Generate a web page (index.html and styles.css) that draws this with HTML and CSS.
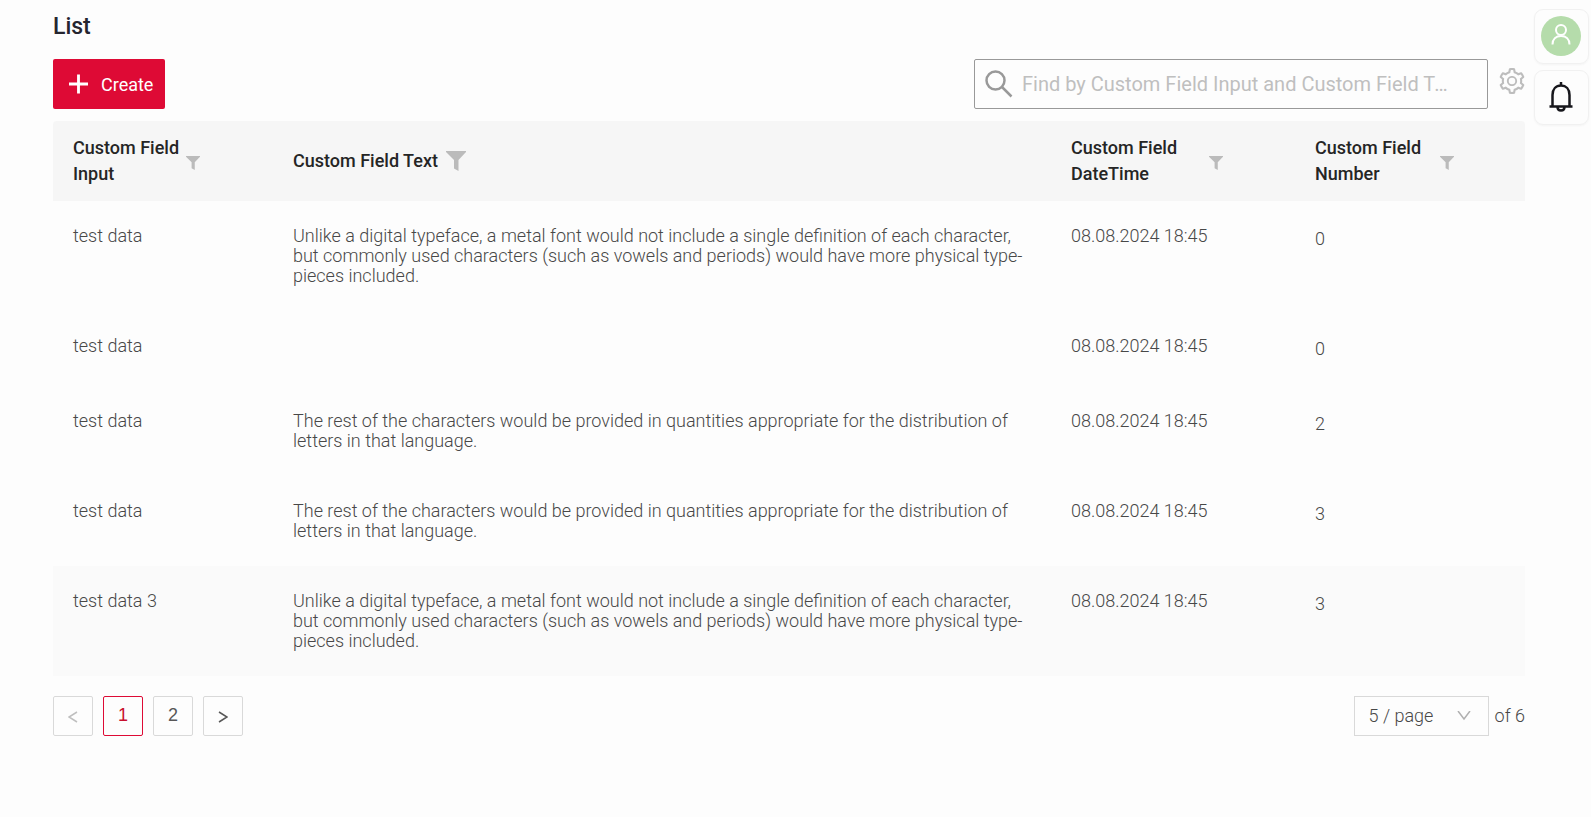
FILE: index.html
```html
<!DOCTYPE html>
<html lang="en">
<head>
<meta charset="utf-8">
<title>List</title>
<link rel="stylesheet" href="styles.css">
</head>
<body>
<svg class="defs" aria-hidden="true">
  <symbol id="funnel" viewBox="0 0 20 20"><path d="M0 0H20V1L12.5 9V20L8 17.5V9L0 1Z"/></symbol>
</svg>
<div class="page">
  <main class="main">
    <h1 class="title">List</h1>
    <div class="toolbar">
      <button class="create" type="button">
        <svg class="create-icon" viewBox="0 0 20 20"><path d="M10 0V20M0 10H20"/></svg>
        <span>Create</span>
      </button>
      <div class="tools">
        <label class="search">
          <svg class="search-icon" viewBox="0 0 28 28"><circle cx="10.500" cy="10.500" r="9"/><path d="M17 17L26.500 26.500"/></svg>
          <input class="search-input" type="text" aria-label="Search" placeholder="Find by Custom Field Input and Custom Field Text">
        </label>
        <button class="settings" type="button" aria-label="Table settings">
          <svg viewBox="64 64 896 896"><path d="M924.8 625.7l-65.5-56c3.1-19 4.7-38.4 4.7-57.8s-1.6-38.8-4.7-57.8l65.5-56a32.03 32.03 0 009.3-35.2l-.9-2.6a443.74 443.74 0 00-79.700-137.900l-1.800-2.100a32.120 32.120 0 00-35.100-9.500l-81.300 28.900c-30-24.600-63.500-44-99.700-57.600l-15.700-85a32.050 32.050 0 00-25.800-25.700l-2.700-.5c-52.100-9.400-106.900-9.400-159 0l-2.700.5a32.050 32.050 0 00-25.800 25.700l-15.800 85.400a351.860 351.860 0 00-99 57.400l-81.900-29.100a32 32 0 00-35.100 9.500l-1.800 2.100a446.020 446.020 0 00-79.700 137.900l-.9 2.600c-4.500 12.500-.8 26.500 9.300 35.200l66.300 56.600c-3.100 18.800-4.600 38-4.600 57.100 0 19.200 1.500 38.400 4.600 57.100L99 625.500a32.030 32.030 0 00-9.300 35.200l.9 2.600c18.100 50.400 44.900 96.900 79.700 137.900l1.800 2.100a32.120 32.120 0 0035.100 9.500l81.900-29.100c29.800 24.500 63.100 43.900 99 57.400l15.800 85.400a32.050 32.050 0 0025.800 25.700l2.700.5a449.400 449.400 0 00159 0l2.700-.5a32.050 32.050 0 0025.800-25.700l15.700-85a350 350 0 0099.700-57.600l81.300 28.900a32 32 0 0035.100-9.500l1.800-2.100c34.800-41.100 61.600-87.500 79.700-137.900l.9-2.600c4.500-12.300.8-26.300-9.300-35zM788.300 465.900c2.500 15.100 3.800 30.600 3.800 46.100s-1.300 31-3.800 46.100l-6.600 40.100 74.700 63.900a370.030 370.030 0 01-42.600 73.600L721 702.800l-31.400 25.800c-23.900 19.600-50.500 35-79.300 45.800l-38.100 14.300-17.900 97a377.500 377.500 0 01-85 0l-17.900-97.200-37.800-14.500c-28.500-10.800-55-26.200-78.700-45.700l-31.400-25.900-93.400 33.200c-17-22.900-31.200-47.600-42.600-73.600l75.500-64.500-6.500-40c-2.400-14.900-3.700-30.300-3.700-45.500 0-15.300 1.200-30.600 3.700-45.500l6.500-40-75.500-64.500c11.300-26.100 25.600-50.700 42.600-73.600l93.400 33.200 31.400-25.900c23.700-19.500 50.200-34.900 78.700-45.700l37.900-14.300 17.900-97.200c28.100-3.200 56.800-3.200 85 0l17.900 97 38.100 14.300c28.700 10.800 55.400 26.200 79.300 45.800l31.400 25.800 92.800-32.900c17 22.900 31.200 47.600 42.600 73.600L781.800 426l6.500 39.900zM512 336c-97.200 0-176 78.800-176 176s78.800 176 176 176 176-78.800 176-176-78.800-176-176-176zm0 288a112 112 0 110-224 112 112 0 010 224z" fill-rule="evenodd"/></svg>
        </button>
      </div>
    </div>
    <table class="table">
      <colgroup><col class="col-input"><col><col class="col-date"><col class="col-number"></colgroup>
      <thead>
        <tr>
          <th><div class="head"><span>Custom Field Input</span><button class="filter" type="button" aria-label="Filter by input"><svg><use href="#funnel"/></svg></button></div></th>
          <th><div class="head single"><span>Custom Field Text</span><button class="filter large" type="button" aria-label="Filter by text"><svg><use href="#funnel"/></svg></button></div></th>
          <th><div class="head wide"><span>Custom Field DateTime</span><button class="filter" type="button" aria-label="Filter by date"><svg><use href="#funnel"/></svg></button></div></th>
          <th><div class="head medium"><span>Custom Field Number</span><button class="filter" type="button" aria-label="Filter by number"><svg><use href="#funnel"/></svg></button></div></th>
        </tr>
      </thead>
      <tbody>
        <tr><td>test data</td><td>Unlike a digital typeface, a metal font would not include a single definition of each character, but commonly used characters (such as vowels and periods) would have more physical type-pieces included.</td><td>08.08.2024 18:45</td><td class="number">0</td></tr>
        <tr><td>test data</td><td></td><td>08.08.2024 18:45</td><td class="number">0</td></tr>
        <tr><td>test data</td><td>The rest of the characters would be provided in quantities appropriate for the distribution of letters in that language.</td><td>08.08.2024 18:45</td><td class="number">2</td></tr>
        <tr><td>test data</td><td>The rest of the characters would be provided in quantities appropriate for the distribution of letters in that language.</td><td>08.08.2024 18:45</td><td class="number">3</td></tr>
        <tr class="hovered"><td>test data 3</td><td>Unlike a digital typeface, a metal font would not include a single definition of each character, but commonly used characters (such as vowels and periods) would have more physical type-pieces included.</td><td>08.08.2024 18:45</td><td class="number">3</td></tr>
      </tbody>
    </table>
    <div class="footer">
      <nav class="pager" aria-label="Pages">
        <button class="page-btn arrow" type="button" aria-label="Previous page" disabled><svg viewBox="0 0 10 12"><path d="M9 1L1 6L9 11"/></svg></button>
        <button class="page-btn current" type="button" aria-current="page">1</button>
        <button class="page-btn" type="button">2</button>
        <button class="page-btn arrow" type="button" aria-label="Next page"><svg viewBox="0 0 10 12"><path d="M1 1L9 6L1 11"/></svg></button>
      </nav>
      <div class="sizer">
        <div class="size-box">
          <select class="size" aria-label="Rows per page"><option>5 / page</option><option>10 / page</option></select>
          <svg class="size-arrow" viewBox="0 0 14 10"><path d="M1 0L7 8L13 0"/></svg>
        </div>
        <span>of 6</span>
      </div>
    </div>
  </main>
  <aside class="rail">
    <button class="rail-card" type="button" aria-label="Account">
      <span class="avatar"><svg viewBox="0 0 20 22"><circle cx="10" cy="6" r="5"/><path d="M1.500 20.500C1.500 15 5 12 10 12S18.500 15 18.500 20.500"/></svg></span>
    </button>
    <button class="rail-card" type="button" aria-label="Notifications">
      <svg class="bell" viewBox="0 0 24 30"><path d="M3.500 24V13C3.500 7 7 3.500 12 3.500S20.500 7 20.500 13V24M0.500 24.500H23.500M12 0V4M8.500 25C8.500 29.700 15.500 29.700 15.500 25"/></svg>
    </button>
  </aside>
</div>
</body>
</html>
```
FILE: styles.css
```css
* { box-sizing: border-box; }

body {
  margin: 0;
  background: #fdfdfd;
  color: #484848;
  font: 300 18px/20px Roboto, sans-serif;
}

button, input, select { font: inherit; color: inherit; }
button { padding: 0; border: 0; background: none; cursor: pointer; }
svg { display: block; flex: none; }
.defs { position: absolute; width: 0; height: 0; }

.page { display: flex; gap: 9px; padding-right: 2px; }
.main { flex: 1; min-width: 0; padding: 12px 0 20px 53px; }

.title {
  margin: 0 0 17px;
  color: #25252f;
  font-size: 23px;
  line-height: 30px;
  font-weight: 500;
}

.toolbar {
  display: flex;
  justify-content: space-between;
  margin-bottom: 12px;
}

.create {
  display: flex;
  align-items: center;
  gap: 13px;
  height: 50px;
  padding: 2px 12px 0 16px;
  border-radius: 2px;
  background: #de0a35;
  color: #fff;
  font-weight: 400;
}
.create-icon { width: 19px; height: 20px; margin-bottom: 2px; fill: none; stroke: #fff; stroke-width: 3; }

.tools { display: flex; gap: 11px; }
.search {
  display: flex;
  align-items: center;
  gap: 9px;
  width: 514px;
  height: 50px;
  padding: 0 38px 0 10px;
  border: 1px solid #999;
  border-radius: 2px;
}
.search-icon { width: 28px; height: 28px; fill: none; stroke: #999; stroke-width: 2.5; }
.search-input {
  flex: 1;
  min-width: 0;
  padding: 0;
  border: 0;
  outline: 0;
  background: none;
  font-size: 20px;
  font-weight: 400;
  line-height: 24px;
  text-overflow: ellipsis;
}
.search-input::placeholder { color: #bfbfbf; opacity: 1; }
.settings { align-self: flex-start; padding-top: 9px; }
.settings svg { width: 26px; height: 26px; fill: #bdbdbd; }

.table {
  width: 100%;
  table-layout: fixed;
  border-collapse: separate;
  border-spacing: 0;
}
.col-input { width: 220px; }
.col-date { width: 244px; }
.col-number { width: 230px; }

th {
  height: 80px;
  padding: 0 20px;
  background: #f6f6f6;
  color: #252525;
  font-weight: 500;
  line-height: 26px;
  text-align: left;
}
th:first-child { border-top-left-radius: 4px; }
th:last-child { border-top-right-radius: 4px; }

.head { display: flex; align-items: center; gap: 4px; }
.head span { max-width: 109px; }
.head.single { gap: 8px; }
.head.single span { max-width: none; }
.head.wide { gap: 29px; }
.head.medium { gap: 16px; }
.filter { padding-top: 4px; }
.filter svg { width: 14px; height: 14px; fill: #bbb; }
.filter.large { padding-top: 0; }
.filter.large svg { width: 20px; height: 20px; }

td { padding: 25px 20px; vertical-align: top; }
.number { padding-top: 26px; line-height: 24px; }
.hovered td { background: #fafafa; }

.footer {
  display: flex;
  justify-content: space-between;
  padding-top: 20px;
}
.pager { display: flex; gap: 10px; }
.page-btn {
  display: flex;
  align-items: center;
  justify-content: center;
  width: 40px;
  height: 40px;
  padding-bottom: 2px;
  border: 1px solid #d9d9d9;
  border-radius: 2px;
  color: #575757;
  font-family: "Liberation Sans", Arial, sans-serif;
}
.page-btn.current { border-color: #de0a35; color: #c8102e; }
.arrow { padding: 2px 0 0; }
.arrow svg { width: 10px; height: 12px; fill: none; stroke: #575757; stroke-width: 1.5; }
.arrow:disabled svg { stroke: #bfbfbf; }

.sizer { display: flex; align-items: center; gap: 6px; }
.size-box { display: grid; align-items: center; }
.size {
  grid-area: 1 / 1;
  appearance: none;
  width: 135px;
  height: 40px;
  padding: 0 14px;
  border: 1px solid #d9d9d9;
  border-radius: 0;
  background: none;
}
.size-arrow {
  grid-area: 1 / 1;
  justify-self: end;
  width: 14px;
  height: 10px;
  margin-right: 18px;
  fill: none;
  stroke: #b0b0b0;
  stroke-width: 1.5;
  pointer-events: none;
}

.rail { display: flex; flex-direction: column; gap: 6px; padding-top: 9px; }
.rail-card {
  display: flex;
  align-items: center;
  justify-content: center;
  width: 55px;
  height: 55px;
  padding: 0 2px 2px 0;
  border: 1px solid #f1f1f1;
  border-radius: 9px;
  box-shadow: 0 1px 2px #f4f4f4;
}
.avatar {
  display: flex;
  justify-content: center;
  width: 40px;
  height: 40px;
  padding-top: 8px;
  border-radius: 50%;
  background: #b5dcab;
}
.avatar svg { width: 20px; height: 22px; fill: none; stroke: #fff; stroke-width: 2; }
.bell { width: 24px; height: 30px; fill: none; stroke: #17171c; stroke-width: 2.5; }
```
